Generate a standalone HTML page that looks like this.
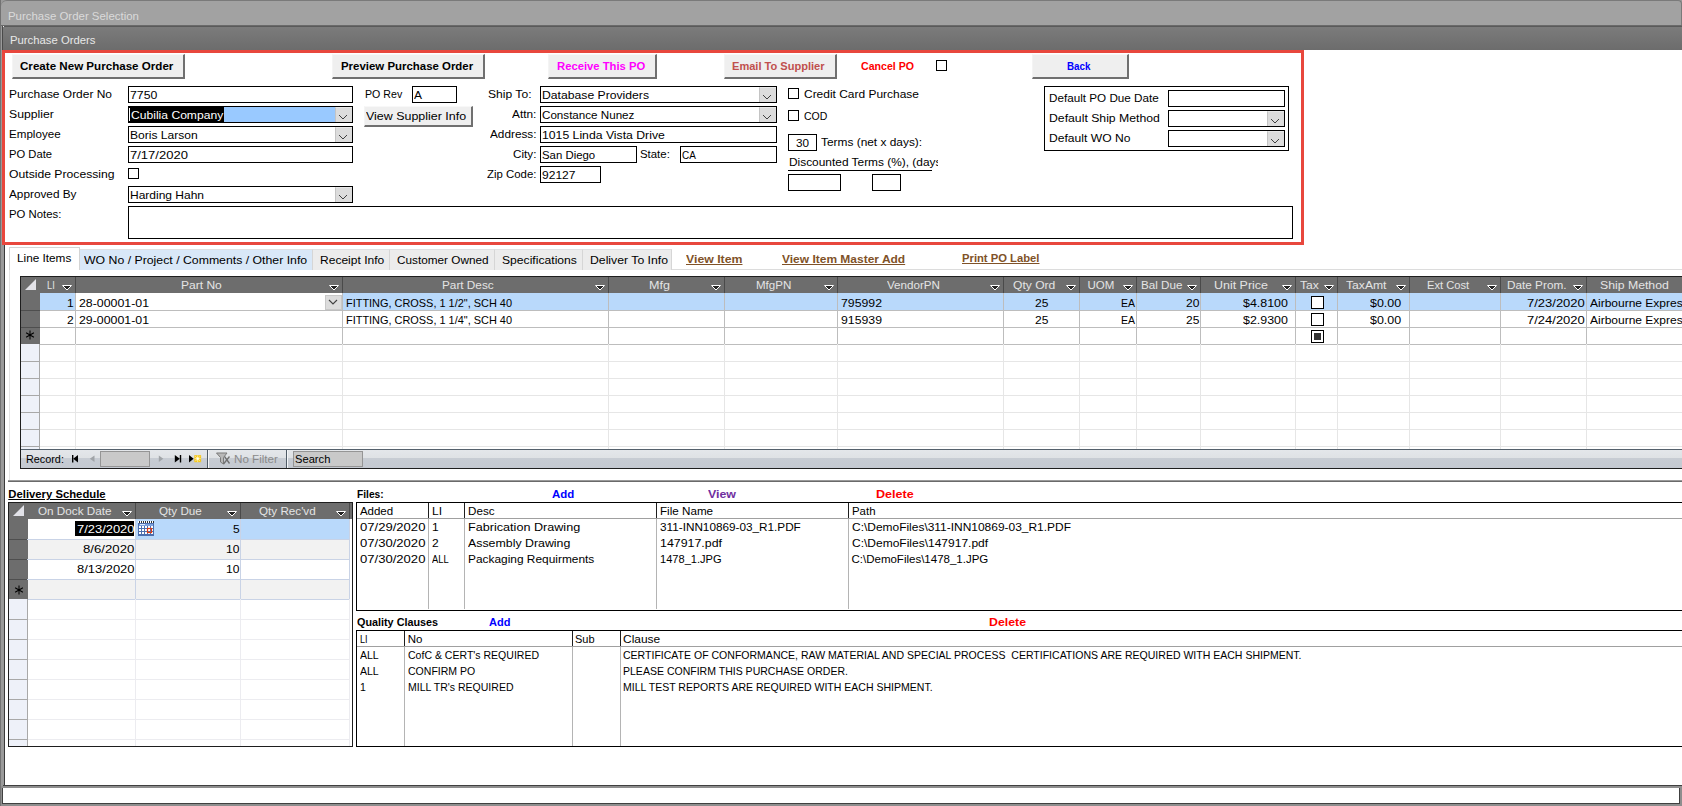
<!DOCTYPE html>
<html><head><meta charset="utf-8"><title>Purchase Order Selection</title><style>
html,body{margin:0;padding:0;}
body{width:1682px;height:806px;overflow:hidden;position:relative;font-family:"Liberation Sans",sans-serif;font-size:12px;color:#000;background:#fff;}
.a{position:absolute;}
.t{position:absolute;line-height:14px;white-space:nowrap;transform-origin:0 0;}
</style></head><body>
<div class="a" style="left:0px;top:0px;width:1682px;height:806px;background:#9a9a9a;"></div>
<div class="a" style="left:0px;top:0px;width:1px;height:806px;background:#727272;"></div>
<div class="a" style="left:1px;top:0px;width:1681px;height:25px;background:#a2a2a2;border-top-left-radius:6px;border-top-right-radius:4px;border-top:1px solid #7a7a7a;border-right:1px solid #7a7a7a;box-sizing:border-box;"></div>
<div class="a" style="left:1px;top:25px;width:1681px;height:1px;background:#6a6a6a;"></div>
<div class="t" style="left:7.80px;top:9px;font-size:11.4px;color:#dadada;transform:scaleX(1.0036);">Purchase Order Selection</div>
<div class="a" style="left:2px;top:26px;width:1680px;height:24px;background:linear-gradient(#7c7c7c,#6c6c6c);"></div>
<div class="a" style="left:2px;top:26px;width:1680px;height:1px;background:#5a5a5a;"></div>
<div class="a" style="left:2px;top:26px;width:1px;height:24px;background:#4a4a4a;"></div>
<div class="a" style="left:3px;top:26px;width:1px;height:1px;background:#f0f0f0;"></div>
<div class="t" style="left:9.70px;top:33px;font-size:11.4px;color:#e8e8e8;transform:scaleX(0.9934);">Purchase Orders</div>
<div class="a" style="left:5px;top:50px;width:1677px;height:735px;background:#fff;"></div>
<div class="a" style="left:4px;top:50px;width:1px;height:735px;background:#3a3a3a;"></div>
<div class="a" style="left:3px;top:785px;width:1679px;height:1px;background:#404040;"></div>
<div class="a" style="left:1px;top:786px;width:1681px;height:20px;background:#8e8e8e;"></div>
<div class="a" style="left:2px;top:788px;width:1676px;height:15px;background:#fff;border-left:1px solid #404040;border-right:1px solid #404040;border-bottom:1px solid #404040;"></div>
<div class="a" style="left:2px;top:50px;width:1296px;height:189px;border:3px solid #e8473d;background:#fff;"></div>
<div class="a" style="left:12px;top:54px;width:170px;height:22px;background:#efefef;border-top:1px solid #f8f8f8;border-left:1px solid #f4f4f4;border-right:2px solid #707070;border-bottom:2px solid #707070;"></div>
<div class="t" style="left:19.60px;top:59px;font-size:11.3px;font-weight:bold;color:#000;transform:scaleX(1.0262);">Create New Purchase Order</div>
<div class="a" style="left:332px;top:54px;width:150px;height:22px;background:#efefef;border-top:1px solid #f8f8f8;border-left:1px solid #f4f4f4;border-right:2px solid #707070;border-bottom:2px solid #707070;"></div>
<div class="t" style="left:340.80px;top:59px;font-size:11.3px;font-weight:bold;color:#000;transform:scaleX(1.0119);">Preview Purchase Order</div>
<div class="a" style="left:548px;top:54px;width:106px;height:22px;background:#efefef;border-top:1px solid #f8f8f8;border-left:1px solid #f4f4f4;border-right:2px solid #707070;border-bottom:2px solid #707070;"></div>
<div class="t" style="left:557.10px;top:59px;font-size:11.3px;font-weight:bold;color:#ff00ff;transform:scaleX(0.9971);">Receive This PO</div>
<div class="a" style="left:724px;top:54px;width:110px;height:22px;background:#efefef;border-top:1px solid #f8f8f8;border-left:1px solid #f4f4f4;border-right:2px solid #707070;border-bottom:2px solid #707070;"></div>
<div class="t" style="left:732.40px;top:59px;font-size:11.3px;font-weight:bold;color:#c0504d;transform:scaleX(0.9789);">Email To Supplier</div>
<div class="t" style="left:860.70px;top:59px;font-size:11.3px;font-weight:bold;color:#ff0000;transform:scaleX(0.9377);">Cancel PO</div>
<div class="a" style="left:936px;top:60px;width:9px;height:9px;border:1px solid #000;background:#fff;"></div>
<div class="a" style="left:1032px;top:54px;width:94px;height:22px;background:#efefef;border-top:1px solid #f8f8f8;border-left:1px solid #f4f4f4;border-right:2px solid #707070;border-bottom:2px solid #707070;"></div>
<div class="t" style="left:1067.00px;top:59px;font-size:11.3px;font-weight:bold;color:#0000ff;transform:scaleX(0.8662);">Back</div>
<div class="t" style="left:8.70px;top:87px;font-size:11.5px;transform:scaleX(1.0396);">Purchase Order No</div>
<div class="t" style="left:8.70px;top:107px;font-size:11.5px;transform:scaleX(1.0618);">Supplier</div>
<div class="t" style="left:8.70px;top:127px;font-size:11.5px;transform:scaleX(1.0090);">Employee</div>
<div class="t" style="left:8.70px;top:147px;font-size:11.5px;transform:scaleX(0.9750);">PO Date</div>
<div class="t" style="left:8.70px;top:167px;font-size:11.5px;transform:scaleX(1.0590);">Outside Processing</div>
<div class="t" style="left:8.70px;top:187px;font-size:11.5px;transform:scaleX(1.0251);">Approved By</div>
<div class="t" style="left:8.70px;top:207px;font-size:11.5px;transform:scaleX(0.9859);">PO Notes:</div>
<div class="a" style="left:128px;top:86px;width:223px;height:15px;border:1px solid #000;background:#fff;"></div>
<div class="t" style="left:129.90px;top:88px;font-size:11.5px;transform:scaleX(1.0671);">7750</div>
<div class="a" style="left:128px;top:106px;width:223px;height:15px;border:1px solid #000;background:#fff;"></div>
<div class="a" style="left:129px;top:107px;width:206px;height:15px;background:#99c9ff;"></div>
<div class="a" style="left:129px;top:107px;width:95px;height:15px;background:#000;"></div>
<div class="a" style="left:129px;top:108px;width:1px;height:13px;background:#fff;"></div>
<div class="t" style="left:130.60px;top:108px;font-size:11.5px;color:#fff;transform:scaleX(1.0529);">Cubilia Company</div>
<div class="a" style="left:335px;top:107px;width:16px;height:14px;background:#dcdcdc;border-left:1px solid #c4c4c4;border-top:1px solid #e8e8e8;"></div>
<svg class="a" style="left:338px;top:114px" width="10" height="6"><path d="M1 1 L5 5 L9 1" fill="none" stroke="#404040" stroke-width="1"/></svg>
<div class="a" style="left:128px;top:126px;width:223px;height:15px;border:1px solid #000;background:#fff;"></div>
<div class="t" style="left:129.90px;top:128px;font-size:11.5px;transform:scaleX(1.0502);">Boris Larson</div>
<div class="a" style="left:335px;top:127px;width:16px;height:14px;background:#dcdcdc;border-left:1px solid #c4c4c4;border-top:1px solid #e8e8e8;"></div>
<svg class="a" style="left:338px;top:134px" width="10" height="6"><path d="M1 1 L5 5 L9 1" fill="none" stroke="#404040" stroke-width="1"/></svg>
<div class="a" style="left:128px;top:146px;width:223px;height:15px;border:1px solid #000;background:#fff;"></div>
<div class="t" style="left:129.90px;top:148px;font-size:11.5px;transform:scaleX(1.1317);">7/17/2020</div>
<div class="a" style="left:128px;top:168px;width:9px;height:9px;border:1px solid #000;background:#fff;"></div>
<div class="a" style="left:128px;top:186px;width:223px;height:15px;border:1px solid #000;background:#fff;"></div>
<div class="t" style="left:129.90px;top:188px;font-size:11.5px;transform:scaleX(1.0435);">Harding Hahn</div>
<div class="a" style="left:335px;top:187px;width:16px;height:14px;background:#dcdcdc;border-left:1px solid #c4c4c4;border-top:1px solid #e8e8e8;"></div>
<svg class="a" style="left:338px;top:194px" width="10" height="6"><path d="M1 1 L5 5 L9 1" fill="none" stroke="#404040" stroke-width="1"/></svg>
<div class="a" style="left:128px;top:206px;width:1163px;height:31px;border:1px solid #000;background:#fff;"></div>
<div class="t" style="left:364.90px;top:87px;font-size:11.5px;transform:scaleX(0.9240);">PO Rev</div>
<div class="a" style="left:412px;top:86px;width:43px;height:15px;border:1px solid #000;background:#fff;"></div>
<div class="t" style="left:413.70px;top:88px;font-size:11.5px;transform:scaleX(1.0435);">A</div>
<div class="a" style="left:364px;top:106px;width:106px;height:18px;background:#efefef;border-top:1px solid #f8f8f8;border-left:1px solid #f4f4f4;border-right:2px solid #707070;border-bottom:2px solid #707070;"></div>
<div class="t" style="left:366.40px;top:109px;font-size:11.5px;transform:scaleX(1.0823);">View Supplier Info</div>
<div class="t" style="left:488.10px;top:87px;font-size:11.5px;transform:scaleX(1.0521);">Ship To:</div>
<div class="t" style="left:511.90px;top:107px;font-size:11.5px;transform:scaleX(1.0274);">Attn:</div>
<div class="t" style="left:489.70px;top:127px;font-size:11.5px;transform:scaleX(1.0246);">Address:</div>
<div class="t" style="left:512.70px;top:147px;font-size:11.5px;transform:scaleX(1.0174);">City:</div>
<div class="t" style="left:640.30px;top:147px;font-size:11.5px;transform:scaleX(0.9917);">State:</div>
<div class="t" style="left:486.70px;top:167px;font-size:11.5px;transform:scaleX(0.9908);">Zip Code:</div>
<div class="a" style="left:540px;top:86px;width:235px;height:15px;border:1px solid #000;background:#fff;"></div>
<div class="t" style="left:542.00px;top:88px;font-size:11.5px;transform:scaleX(1.0594);">Database Providers</div>
<div class="a" style="left:759px;top:87px;width:16px;height:14px;background:#dcdcdc;border-left:1px solid #c4c4c4;border-top:1px solid #e8e8e8;"></div>
<svg class="a" style="left:762px;top:94px" width="10" height="6"><path d="M1 1 L5 5 L9 1" fill="none" stroke="#404040" stroke-width="1"/></svg>
<div class="a" style="left:540px;top:106px;width:235px;height:15px;border:1px solid #000;background:#fff;"></div>
<div class="t" style="left:542.00px;top:108px;font-size:11.5px;transform:scaleX(1.0107);">Constance Nunez</div>
<div class="a" style="left:759px;top:107px;width:16px;height:14px;background:#dcdcdc;border-left:1px solid #c4c4c4;border-top:1px solid #e8e8e8;"></div>
<svg class="a" style="left:762px;top:114px" width="10" height="6"><path d="M1 1 L5 5 L9 1" fill="none" stroke="#404040" stroke-width="1"/></svg>
<div class="a" style="left:540px;top:126px;width:235px;height:15px;border:1px solid #000;background:#fff;"></div>
<div class="t" style="left:542.00px;top:128px;font-size:11.5px;transform:scaleX(1.0632);">1015 Linda Vista Drive</div>
<div class="a" style="left:540px;top:146px;width:95px;height:15px;border:1px solid #000;background:#fff;"></div>
<div class="t" style="left:542.00px;top:148px;font-size:11.5px;transform:scaleX(0.9906);">San Diego</div>
<div class="a" style="left:680px;top:146px;width:95px;height:15px;border:1px solid #000;background:#fff;"></div>
<div class="t" style="left:681.60px;top:148px;font-size:11.5px;transform:scaleX(0.8638);">CA</div>
<div class="a" style="left:540px;top:166px;width:59px;height:15px;border:1px solid #000;background:#fff;"></div>
<div class="t" style="left:542.00px;top:168px;font-size:11.5px;transform:scaleX(1.0475);">92127</div>
<div class="a" style="left:788px;top:88px;width:9px;height:9px;border:1px solid #000;background:#fff;"></div>
<div class="t" style="left:804.00px;top:87px;font-size:11.5px;transform:scaleX(1.0400);">Credit Card Purchase</div>
<div class="a" style="left:788px;top:110px;width:9px;height:9px;border:1px solid #000;background:#fff;"></div>
<div class="t" style="left:804.00px;top:109px;font-size:11.5px;transform:scaleX(0.9118);">COD</div>
<div class="a" style="left:788px;top:134px;width:27px;height:15px;border:1px solid #000;background:#fff;"></div>
<div class="t" style="left:795.50px;top:136px;font-size:11.5px;transform:scaleX(1.0162);">30</div>
<div class="t" style="left:820.90px;top:135px;font-size:11.5px;transform:scaleX(1.0340);">Terms (net x days):</div>
<div class="a" style="left:789px;top:155px;width:149px;height:14px;overflow:hidden">
<div class="t" style="left:0.10px;top:0px;font-size:11.5px;transform:scaleX(1.0340);">Discounted Terms (%), (days):</div>
</div>
<div class="a" style="left:788px;top:170px;width:144px;height:1px;background:#000;"></div>
<div class="a" style="left:788px;top:174px;width:51px;height:15px;border:1px solid #000;background:#fff;"></div>
<div class="a" style="left:872px;top:174px;width:27px;height:15px;border:1px solid #000;background:#fff;"></div>
<div class="a" style="left:1044px;top:86px;width:243px;height:63px;border:1px solid #000;"></div>
<div class="t" style="left:1048.80px;top:91px;font-size:11.5px;transform:scaleX(1.0164);">Default PO Due Date</div>
<div class="t" style="left:1048.80px;top:111px;font-size:11.5px;transform:scaleX(1.0642);">Default Ship Method</div>
<div class="t" style="left:1048.80px;top:131px;font-size:11.5px;transform:scaleX(1.0526);">Default WO No</div>
<div class="a" style="left:1168px;top:90px;width:115px;height:15px;border:1px solid #000;background:#fff;"></div>
<div class="a" style="left:1168px;top:110px;width:115px;height:15px;border:1px solid #000;background:#fff;"></div>
<div class="a" style="left:1267px;top:111px;width:16px;height:14px;background:#dcdcdc;border-left:1px solid #c4c4c4;border-top:1px solid #e8e8e8;"></div>
<svg class="a" style="left:1270px;top:118px" width="10" height="6"><path d="M1 1 L5 5 L9 1" fill="none" stroke="#404040" stroke-width="1"/></svg>
<div class="a" style="left:1168px;top:130px;width:115px;height:15px;border:1px solid #000;background:#fff;"></div>
<div class="a" style="left:1267px;top:131px;width:16px;height:14px;background:#dcdcdc;border-left:1px solid #c4c4c4;border-top:1px solid #e8e8e8;"></div>
<svg class="a" style="left:1270px;top:138px" width="10" height="6"><path d="M1 1 L5 5 L9 1" fill="none" stroke="#404040" stroke-width="1"/></svg>
<div class="a" style="left:9px;top:269px;width:1673px;height:212px;border-left:1px solid #e4e4e4;border-top:1px solid #dcdcdc;"></div>
<div class="a" style="left:8px;top:480px;width:1674px;height:1px;background:#9a9a9a;"></div>
<div class="a" style="left:8px;top:481px;width:1674px;height:1px;background:#6a6a6a;"></div>
<div class="a" style="left:80px;top:249px;width:232px;height:20px;background:#d9e8f8;border-right:1px solid #d6d6d6;border-top:1px solid #e0e0e0;"></div>
<div class="t" style="left:83.80px;top:253px;font-size:11.5px;transform:scaleX(1.0680);">WO No / Project / Comments / Other Info</div>
<div class="a" style="left:313px;top:249px;width:76px;height:20px;background:#ececec;border-right:1px solid #d6d6d6;border-top:1px solid #e0e0e0;"></div>
<div class="t" style="left:319.60px;top:253px;font-size:11.5px;transform:scaleX(1.0461);">Receipt Info</div>
<div class="a" style="left:390px;top:249px;width:104px;height:20px;background:#ececec;border-right:1px solid #d6d6d6;border-top:1px solid #e0e0e0;"></div>
<div class="t" style="left:396.90px;top:253px;font-size:11.5px;transform:scaleX(1.0226);">Customer Owned</div>
<div class="a" style="left:495px;top:249px;width:87px;height:20px;background:#ececec;border-right:1px solid #d6d6d6;border-top:1px solid #e0e0e0;"></div>
<div class="t" style="left:501.50px;top:253px;font-size:11.5px;transform:scaleX(1.0556);">Specifications</div>
<div class="a" style="left:583px;top:249px;width:88px;height:20px;background:#ececec;border-right:1px solid #d6d6d6;border-top:1px solid #e0e0e0;"></div>
<div class="t" style="left:590.00px;top:253px;font-size:11.5px;transform:scaleX(1.0642);">Deliver To Info</div>
<div class="a" style="left:9px;top:247px;width:69px;height:22px;background:#fff;border:1px solid #d4d4d4;border-bottom:none;"></div>
<div class="t" style="left:16.70px;top:251px;font-size:11.5px;transform:scaleX(1.0235);">Line Items</div>
<div class="t" style="left:685.60px;top:252px;font-size:11.3px;font-weight:bold;color:#7f5228;transform:scaleX(1.0882);text-decoration:underline;">View Item</div>
<div class="t" style="left:781.70px;top:252px;font-size:11.3px;font-weight:bold;color:#7f5228;transform:scaleX(1.0605);text-decoration:underline;">View Item Master Add</div>
<div class="t" style="left:961.60px;top:251px;font-size:11.3px;font-weight:bold;color:#7f5228;transform:scaleX(0.9954);text-decoration:underline;">Print PO Label</div>
<div class="a" style="left:20px;top:276px;width:1662px;height:193px;background:#fff;"></div>
<div class="a" style="left:20px;top:276px;width:1662px;height:1px;background:#1e1e1e;"></div>
<div class="a" style="left:20px;top:276px;width:1px;height:193px;background:#1e1e1e;"></div>
<div class="a" style="left:20px;top:468px;width:1662px;height:1px;background:#1e1e1e;"></div>
<div class="a" style="left:21px;top:277px;width:1661px;height:16px;background:#6d6d6d;"></div>
<svg class="a" style="left:25px;top:279px" width="12" height="12"><path d="M11 0 L11 11 L0 11 Z" fill="#e2e2e8"/></svg>
<div class="a" style="left:21px;top:293px;width:19px;height:51px;background:#6d6d6d;"></div>
<div class="a" style="left:21px;top:310px;width:19px;height:1px;background:#4e4e4e;"></div>
<div class="a" style="left:21px;top:327px;width:19px;height:1px;background:#4e4e4e;"></div>
<div class="a" style="left:21px;top:344px;width:18px;height:105px;background:#eef1f9;"></div>
<div class="a" style="left:21px;top:361px;width:18px;height:1px;background:#a8a8a8;"></div>
<div class="a" style="left:21px;top:378px;width:18px;height:1px;background:#a8a8a8;"></div>
<div class="a" style="left:21px;top:395px;width:18px;height:1px;background:#a8a8a8;"></div>
<div class="a" style="left:21px;top:412px;width:18px;height:1px;background:#a8a8a8;"></div>
<div class="a" style="left:21px;top:429px;width:18px;height:1px;background:#a8a8a8;"></div>
<div class="a" style="left:21px;top:446px;width:18px;height:1px;background:#a8a8a8;"></div>
<div class="a" style="left:39px;top:344px;width:1px;height:105px;background:#a8a8a8;"></div>
<div class="a" style="left:40px;top:293px;width:1642px;height:17px;background:#b9d9fb;"></div>
<div class="a" style="left:76px;top:293px;width:266px;height:17px;background:#fff;"></div>
<div class="a" style="left:40px;top:310px;width:1642px;height:1px;background:#bdbdbd;"></div>
<div class="a" style="left:40px;top:327px;width:1642px;height:1px;background:#bdbdbd;"></div>
<div class="a" style="left:40px;top:344px;width:1642px;height:1px;background:#bdbdbd;"></div>
<div class="a" style="left:40px;top:361px;width:1642px;height:1px;background:#e6e6e6;"></div>
<div class="a" style="left:40px;top:378px;width:1642px;height:1px;background:#e6e6e6;"></div>
<div class="a" style="left:40px;top:395px;width:1642px;height:1px;background:#e6e6e6;"></div>
<div class="a" style="left:40px;top:412px;width:1642px;height:1px;background:#e6e6e6;"></div>
<div class="a" style="left:40px;top:429px;width:1642px;height:1px;background:#e6e6e6;"></div>
<div class="a" style="left:40px;top:446px;width:1642px;height:1px;background:#e6e6e6;"></div>
<div class="a" style="left:75px;top:277px;width:1px;height:16px;background:#4a4a4a;"></div>
<div class="a" style="left:75px;top:293px;width:1px;height:51px;background:#bdbdbd;"></div>
<div class="a" style="left:75px;top:344px;width:1px;height:105px;background:#e6e6e6;"></div>
<div class="a" style="left:342px;top:277px;width:1px;height:16px;background:#4a4a4a;"></div>
<div class="a" style="left:342px;top:293px;width:1px;height:51px;background:#bdbdbd;"></div>
<div class="a" style="left:342px;top:344px;width:1px;height:105px;background:#e6e6e6;"></div>
<div class="a" style="left:608px;top:277px;width:1px;height:16px;background:#4a4a4a;"></div>
<div class="a" style="left:608px;top:293px;width:1px;height:51px;background:#bdbdbd;"></div>
<div class="a" style="left:608px;top:344px;width:1px;height:105px;background:#e6e6e6;"></div>
<div class="a" style="left:724px;top:277px;width:1px;height:16px;background:#4a4a4a;"></div>
<div class="a" style="left:724px;top:293px;width:1px;height:51px;background:#bdbdbd;"></div>
<div class="a" style="left:724px;top:344px;width:1px;height:105px;background:#e6e6e6;"></div>
<div class="a" style="left:837px;top:277px;width:1px;height:16px;background:#4a4a4a;"></div>
<div class="a" style="left:837px;top:293px;width:1px;height:51px;background:#bdbdbd;"></div>
<div class="a" style="left:837px;top:344px;width:1px;height:105px;background:#e6e6e6;"></div>
<div class="a" style="left:1003px;top:277px;width:1px;height:16px;background:#4a4a4a;"></div>
<div class="a" style="left:1003px;top:293px;width:1px;height:51px;background:#bdbdbd;"></div>
<div class="a" style="left:1003px;top:344px;width:1px;height:105px;background:#e6e6e6;"></div>
<div class="a" style="left:1079px;top:277px;width:1px;height:16px;background:#4a4a4a;"></div>
<div class="a" style="left:1079px;top:293px;width:1px;height:51px;background:#bdbdbd;"></div>
<div class="a" style="left:1079px;top:344px;width:1px;height:105px;background:#e6e6e6;"></div>
<div class="a" style="left:1136px;top:277px;width:1px;height:16px;background:#4a4a4a;"></div>
<div class="a" style="left:1136px;top:293px;width:1px;height:51px;background:#bdbdbd;"></div>
<div class="a" style="left:1136px;top:344px;width:1px;height:105px;background:#e6e6e6;"></div>
<div class="a" style="left:1200px;top:277px;width:1px;height:16px;background:#4a4a4a;"></div>
<div class="a" style="left:1200px;top:293px;width:1px;height:51px;background:#bdbdbd;"></div>
<div class="a" style="left:1200px;top:344px;width:1px;height:105px;background:#e6e6e6;"></div>
<div class="a" style="left:1295px;top:277px;width:1px;height:16px;background:#4a4a4a;"></div>
<div class="a" style="left:1295px;top:293px;width:1px;height:51px;background:#bdbdbd;"></div>
<div class="a" style="left:1295px;top:344px;width:1px;height:105px;background:#e6e6e6;"></div>
<div class="a" style="left:1337px;top:277px;width:1px;height:16px;background:#4a4a4a;"></div>
<div class="a" style="left:1337px;top:293px;width:1px;height:51px;background:#bdbdbd;"></div>
<div class="a" style="left:1337px;top:344px;width:1px;height:105px;background:#e6e6e6;"></div>
<div class="a" style="left:1409px;top:277px;width:1px;height:16px;background:#4a4a4a;"></div>
<div class="a" style="left:1409px;top:293px;width:1px;height:51px;background:#bdbdbd;"></div>
<div class="a" style="left:1409px;top:344px;width:1px;height:105px;background:#e6e6e6;"></div>
<div class="a" style="left:1500px;top:277px;width:1px;height:16px;background:#4a4a4a;"></div>
<div class="a" style="left:1500px;top:293px;width:1px;height:51px;background:#bdbdbd;"></div>
<div class="a" style="left:1500px;top:344px;width:1px;height:105px;background:#e6e6e6;"></div>
<div class="a" style="left:1586px;top:277px;width:1px;height:16px;background:#4a4a4a;"></div>
<div class="a" style="left:1586px;top:293px;width:1px;height:51px;background:#bdbdbd;"></div>
<div class="a" style="left:1586px;top:344px;width:1px;height:105px;background:#e6e6e6;"></div>
<div class="a" style="left:1697px;top:277px;width:1px;height:16px;background:#4a4a4a;"></div>
<div class="a" style="left:1697px;top:293px;width:1px;height:51px;background:#bdbdbd;"></div>
<div class="a" style="left:1697px;top:344px;width:1px;height:105px;background:#e6e6e6;"></div>
<div class="t" style="left:46.95px;top:278px;font-size:11.5px;color:#e4e4e4;transform:scaleX(0.8028);">LI</div>
<svg class="a" style="left:62px;top:285px" width="10" height="6"><path d="M0.5 0.5 H9.5 L5 5 Z" fill="#222" stroke="#fff" stroke-width="1" stroke-linejoin="bevel"/></svg>
<div class="t" style="left:181.40px;top:278px;font-size:11.5px;color:#e4e4e4;transform:scaleX(1.0465);">Part No</div>
<svg class="a" style="left:329px;top:285px" width="10" height="6"><path d="M0.5 0.5 H9.5 L5 5 Z" fill="#222" stroke="#fff" stroke-width="1" stroke-linejoin="bevel"/></svg>
<div class="t" style="left:442.45px;top:278px;font-size:11.5px;color:#e4e4e4;transform:scaleX(1.0240);">Part Desc</div>
<svg class="a" style="left:595px;top:285px" width="10" height="6"><path d="M0.5 0.5 H9.5 L5 5 Z" fill="#222" stroke="#fff" stroke-width="1" stroke-linejoin="bevel"/></svg>
<div class="t" style="left:648.85px;top:278px;font-size:11.5px;color:#e4e4e4;transform:scaleX(1.0902);">Mfg</div>
<svg class="a" style="left:711px;top:285px" width="10" height="6"><path d="M0.5 0.5 H9.5 L5 5 Z" fill="#222" stroke="#fff" stroke-width="1" stroke-linejoin="bevel"/></svg>
<div class="t" style="left:756.15px;top:278px;font-size:11.5px;color:#e4e4e4;transform:scaleX(1.0044);">MfgPN</div>
<svg class="a" style="left:824px;top:285px" width="10" height="6"><path d="M0.5 0.5 H9.5 L5 5 Z" fill="#222" stroke="#fff" stroke-width="1" stroke-linejoin="bevel"/></svg>
<div class="t" style="left:886.80px;top:278px;font-size:11.5px;color:#e4e4e4;transform:scaleX(1.0110);">VendorPN</div>
<svg class="a" style="left:990px;top:285px" width="10" height="6"><path d="M0.5 0.5 H9.5 L5 5 Z" fill="#222" stroke="#fff" stroke-width="1" stroke-linejoin="bevel"/></svg>
<div class="t" style="left:1013.15px;top:278px;font-size:11.5px;color:#e4e4e4;transform:scaleX(1.0507);">Qty Ord</div>
<svg class="a" style="left:1066px;top:285px" width="10" height="6"><path d="M0.5 0.5 H9.5 L5 5 Z" fill="#222" stroke="#fff" stroke-width="1" stroke-linejoin="bevel"/></svg>
<div class="t" style="left:1087.40px;top:278px;font-size:11.5px;color:#e4e4e4;">UOM</div>
<svg class="a" style="left:1123px;top:285px" width="10" height="6"><path d="M0.5 0.5 H9.5 L5 5 Z" fill="#222" stroke="#fff" stroke-width="1" stroke-linejoin="bevel"/></svg>
<div class="t" style="left:1140.60px;top:278px;font-size:11.5px;color:#e4e4e4;transform:scaleX(1.0119);">Bal Due</div>
<svg class="a" style="left:1187px;top:285px" width="10" height="6"><path d="M0.5 0.5 H9.5 L5 5 Z" fill="#222" stroke="#fff" stroke-width="1" stroke-linejoin="bevel"/></svg>
<div class="t" style="left:1213.80px;top:278px;font-size:11.5px;color:#e4e4e4;transform:scaleX(1.0833);">Unit Price</div>
<svg class="a" style="left:1282px;top:285px" width="10" height="6"><path d="M0.5 0.5 H9.5 L5 5 Z" fill="#222" stroke="#fff" stroke-width="1" stroke-linejoin="bevel"/></svg>
<div class="t" style="left:1299.85px;top:278px;font-size:11.5px;color:#e4e4e4;transform:scaleX(1.0561);">Tax</div>
<svg class="a" style="left:1324px;top:285px" width="10" height="6"><path d="M0.5 0.5 H9.5 L5 5 Z" fill="#222" stroke="#fff" stroke-width="1" stroke-linejoin="bevel"/></svg>
<div class="t" style="left:1346.05px;top:278px;font-size:11.5px;color:#e4e4e4;transform:scaleX(1.0563);">TaxAmt</div>
<svg class="a" style="left:1396px;top:285px" width="10" height="6"><path d="M0.5 0.5 H9.5 L5 5 Z" fill="#222" stroke="#fff" stroke-width="1" stroke-linejoin="bevel"/></svg>
<div class="t" style="left:1426.70px;top:278px;font-size:11.5px;color:#e4e4e4;transform:scaleX(0.9711);">Ext Cost</div>
<svg class="a" style="left:1487px;top:285px" width="10" height="6"><path d="M0.5 0.5 H9.5 L5 5 Z" fill="#222" stroke="#fff" stroke-width="1" stroke-linejoin="bevel"/></svg>
<div class="t" style="left:1506.55px;top:278px;font-size:11.5px;color:#e4e4e4;transform:scaleX(1.0231);">Date Prom.</div>
<svg class="a" style="left:1573px;top:285px" width="10" height="6"><path d="M0.5 0.5 H9.5 L5 5 Z" fill="#222" stroke="#fff" stroke-width="1" stroke-linejoin="bevel"/></svg>
<div class="t" style="left:1600.40px;top:278px;font-size:11.5px;color:#e4e4e4;transform:scaleX(1.0655);">Ship Method</div>
<div class="a" style="left:325px;top:295px;width:15px;height:13px;background:#dcdcdc;border:1px solid #c8c8c8;"></div>
<svg class="a" style="left:328px;top:299px" width="10" height="6"><path d="M1 1 L5 5 L9 1" fill="none" stroke="#404040" stroke-width="1.1"/></svg>
<div class="t" style="left:67.13px;top:296px;font-size:11.5px;transform:scaleX(1.0435);">1</div>
<div class="t" style="left:78.60px;top:296px;font-size:11.5px;transform:scaleX(1.0732);">28-00001-01</div>
<div class="t" style="left:345.90px;top:296px;font-size:11.5px;transform:scaleX(0.9501);">FITTING, CROSS, 1 1/2&quot;, SCH 40</div>
<div class="t" style="left:840.50px;top:296px;font-size:11.5px;transform:scaleX(1.0684);">795992</div>
<div class="t" style="left:1035.10px;top:296px;font-size:11.5px;transform:scaleX(1.0475);">25</div>
<div class="t" style="left:1121.00px;top:296px;font-size:11.5px;transform:scaleX(0.9126);">EA</div>
<div class="t" style="left:1185.80px;top:296px;font-size:11.5px;transform:scaleX(1.0475);">20</div>
<div class="t" style="left:1242.50px;top:296px;font-size:11.5px;transform:scaleX(1.0801);">$4.8100</div>
<div class="t" style="left:1370.40px;top:296px;font-size:11.5px;transform:scaleX(1.0806);">$0.00</div>
<div class="t" style="left:1527.10px;top:296px;font-size:11.5px;transform:scaleX(1.1297);">7/23/2020</div>
<div class="t" style="left:1589.70px;top:296px;font-size:11.5px;transform:scaleX(1.0435);">Airbourne Express</div>
<div class="t" style="left:67.13px;top:313px;font-size:11.5px;transform:scaleX(1.0435);">2</div>
<div class="t" style="left:78.60px;top:313px;font-size:11.5px;transform:scaleX(1.0732);">29-00001-01</div>
<div class="t" style="left:345.90px;top:313px;font-size:11.5px;transform:scaleX(0.9501);">FITTING, CROSS, 1 1/4&quot;, SCH 40</div>
<div class="t" style="left:840.50px;top:313px;font-size:11.5px;transform:scaleX(1.0684);">915939</div>
<div class="t" style="left:1035.10px;top:313px;font-size:11.5px;transform:scaleX(1.0475);">25</div>
<div class="t" style="left:1121.00px;top:313px;font-size:11.5px;transform:scaleX(0.9126);">EA</div>
<div class="t" style="left:1185.80px;top:313px;font-size:11.5px;transform:scaleX(1.0475);">25</div>
<div class="t" style="left:1242.50px;top:313px;font-size:11.5px;transform:scaleX(1.0801);">$2.9300</div>
<div class="t" style="left:1370.40px;top:313px;font-size:11.5px;transform:scaleX(1.0806);">$0.00</div>
<div class="t" style="left:1527.10px;top:313px;font-size:11.5px;transform:scaleX(1.1297);">7/24/2020</div>
<div class="t" style="left:1589.70px;top:313px;font-size:11.5px;transform:scaleX(1.0435);">Airbourne Express</div>
<div class="a" style="left:1311px;top:296px;width:11px;height:11px;border:1px solid #000;background:#fff;"></div>
<div class="a" style="left:1311px;top:313px;width:11px;height:11px;border:1px solid #000;background:#fff;"></div>
<div class="a" style="left:1311px;top:330px;width:11px;height:11px;border:1px solid #000;background:#fff;"></div>
<div class="a" style="left:1314px;top:333px;width:7px;height:7px;background:#333;"></div>
<svg class="a" style="left:24px;top:329px" width="12" height="12"><path d="M6 1.5 V10.5 M2.1 3.75 L9.9 8.25 M2.1 8.25 L9.9 3.75" stroke="#000" stroke-width="1.05"/></svg>
<div class="a" style="left:21px;top:449px;width:1661px;height:19px;background:linear-gradient(#e4e7eb 0%,#dfe2e5 45%,#c7ccd3 50%,#c4c9d1 100%);"></div>
<div class="a" style="left:21px;top:449px;width:1661px;height:1px;background:#54606c;"></div>
<div class="t" style="left:25.50px;top:452px;font-size:11.5px;color:#000;transform:scaleX(0.9412);">Record:</div>
<svg class="a" style="left:60px;top:448px" width="180" height="21"><rect x="12" y="7" width="1.4" height="7.5" fill="#000"/><path d="M18 7 L13.2 10.75 L18 14.5 Z" fill="#000"/><path d="M34.5 7.5 L29.8 10.75 L34.5 14 Z" fill="#a0a4a8"/><path d="M98.8 7.5 L103.3 10.75 L98.8 14 Z" fill="#a0a4a8"/><path d="M114.8 7 L119.8 10.75 L114.8 14.5 Z" fill="#000"/><rect x="119.8" y="7" width="1.4" height="7.5" fill="#000"/><path d="M129 7 L133.6 10.75 L129 14.5 Z" fill="#000"/><rect x="134.3" y="7.2" width="6.8" height="7" fill="#f5c518"/><path d="M137.7 7.5 V14 M134.6 10.7 H140.8 M135.3 8.3 L140 13.2 M140 8.3 L135.3 13.2" stroke="#fff2a0" stroke-width="0.9"/><circle cx="137.7" cy="10.7" r="1.1" fill="#fff"/><path d="M156.5 5 L167 5 L163.5 9.5 L163.5 16 L160.5 14 L160.5 9.5 Z" fill="#b8b8b8" stroke="#7a7a7a" stroke-width="1"/><path d="M164.5 8.5 L169.5 15.5 M169.5 8.5 L163.5 16" stroke="#707070" stroke-width="1.3"/></svg>
<div class="a" style="left:100px;top:451px;width:48px;height:14px;background:#c9c9c9;border:1px solid #959595;"></div>
<div class="a" style="left:207px;top:450px;width:1px;height:18px;background:#4f5b66;"></div>
<div class="a" style="left:208px;top:450px;width:1px;height:18px;background:#f4f6f8;"></div>
<div class="a" style="left:286px;top:450px;width:1px;height:18px;background:#4f5b66;"></div>
<div class="a" style="left:287px;top:450px;width:1px;height:18px;background:#f4f6f8;"></div>
<div class="t" style="left:233.60px;top:452px;font-size:11.5px;color:#8a8a8a;transform:scaleX(1.0103);">No Filter</div>
<div class="a" style="left:293px;top:451px;width:68px;height:14px;background:#c9c9c9;border:1px solid #959595;"></div>
<div class="t" style="left:294.60px;top:452px;font-size:11.5px;color:#000;transform:scaleX(0.9704);">Search</div>
<div class="t" style="left:8.30px;top:487px;font-size:11.3px;font-weight:bold;text-decoration:underline;">Delivery Schedule</div>
<div class="a" style="left:8px;top:502px;width:345px;height:245px;background:#fff;"></div>
<div class="a" style="left:8px;top:502px;width:345px;height:1px;background:#1e1e1e;"></div>
<div class="a" style="left:8px;top:746px;width:345px;height:1px;background:#1e1e1e;"></div>
<div class="a" style="left:8px;top:502px;width:1px;height:245px;background:#1e1e1e;"></div>
<div class="a" style="left:352px;top:502px;width:1px;height:245px;background:#1e1e1e;"></div>
<div class="a" style="left:9px;top:503px;width:343px;height:16px;background:#6d6d6d;"></div>
<svg class="a" style="left:13px;top:505px" width="12" height="12"><path d="M11 0 L11 11 L0 11 Z" fill="#e2e2e8"/></svg>
<div class="a" style="left:27px;top:519px;width:325px;height:20px;background:#fff;"></div>
<div class="a" style="left:136px;top:519px;width:213px;height:20px;background:#b9d9fb;"></div>
<div class="a" style="left:27px;top:540px;width:323px;height:19px;background:#f2f2f2;"></div>
<div class="a" style="left:27px;top:580px;width:323px;height:19px;background:#f2f2f2;"></div>
<div class="a" style="left:9px;top:519px;width:19px;height:80px;background:#6d6d6d;"></div>
<div class="a" style="left:9px;top:539px;width:18px;height:1px;background:#4e4e4e;"></div>
<div class="a" style="left:9px;top:559px;width:18px;height:1px;background:#4e4e4e;"></div>
<div class="a" style="left:9px;top:579px;width:18px;height:1px;background:#4e4e4e;"></div>
<div class="a" style="left:9px;top:599px;width:18px;height:147px;background:#eef1f9;"></div>
<div class="a" style="left:9px;top:619px;width:18px;height:1px;background:#a8a8a8;"></div>
<div class="a" style="left:9px;top:639px;width:18px;height:1px;background:#a8a8a8;"></div>
<div class="a" style="left:9px;top:659px;width:18px;height:1px;background:#a8a8a8;"></div>
<div class="a" style="left:9px;top:679px;width:18px;height:1px;background:#a8a8a8;"></div>
<div class="a" style="left:9px;top:699px;width:18px;height:1px;background:#a8a8a8;"></div>
<div class="a" style="left:9px;top:719px;width:18px;height:1px;background:#a8a8a8;"></div>
<div class="a" style="left:9px;top:739px;width:18px;height:1px;background:#a8a8a8;"></div>
<div class="a" style="left:27px;top:539px;width:323px;height:1px;background:#c9d3e6;"></div>
<div class="a" style="left:27px;top:559px;width:323px;height:1px;background:#c9d3e6;"></div>
<div class="a" style="left:27px;top:579px;width:323px;height:1px;background:#c9d3e6;"></div>
<div class="a" style="left:27px;top:599px;width:323px;height:1px;background:#c9d3e6;"></div>
<div class="a" style="left:27px;top:619px;width:323px;height:1px;background:#ececf0;"></div>
<div class="a" style="left:27px;top:639px;width:323px;height:1px;background:#ececf0;"></div>
<div class="a" style="left:27px;top:659px;width:323px;height:1px;background:#ececf0;"></div>
<div class="a" style="left:27px;top:679px;width:323px;height:1px;background:#ececf0;"></div>
<div class="a" style="left:27px;top:699px;width:323px;height:1px;background:#ececf0;"></div>
<div class="a" style="left:27px;top:719px;width:323px;height:1px;background:#ececf0;"></div>
<div class="a" style="left:27px;top:739px;width:323px;height:1px;background:#ececf0;"></div>
<div class="a" style="left:27px;top:599px;width:1px;height:147px;background:#a8a8a8;"></div>
<div class="a" style="left:135px;top:503px;width:1px;height:16px;background:#4a4a4a;"></div>
<div class="a" style="left:135px;top:519px;width:1px;height:80px;background:#c9d3e6;"></div>
<div class="a" style="left:135px;top:599px;width:1px;height:147px;background:#ececf0;"></div>
<div class="a" style="left:240px;top:503px;width:1px;height:16px;background:#4a4a4a;"></div>
<div class="a" style="left:240px;top:519px;width:1px;height:80px;background:#c9d3e6;"></div>
<div class="a" style="left:240px;top:599px;width:1px;height:147px;background:#ececf0;"></div>
<div class="a" style="left:349px;top:503px;width:1px;height:16px;background:#4a4a4a;"></div>
<div class="a" style="left:349px;top:519px;width:1px;height:80px;background:#c9d3e6;"></div>
<div class="a" style="left:349px;top:599px;width:1px;height:147px;background:#ececf0;"></div>
<div class="t" style="left:37.55px;top:504px;font-size:11.5px;color:#e4e4e4;transform:scaleX(1.0177);">On Dock Date</div>
<svg class="a" style="left:122px;top:511px" width="10" height="6"><path d="M0.5 0.5 H9.5 L5 5 Z" fill="#222" stroke="#fff" stroke-width="1" stroke-linejoin="bevel"/></svg>
<div class="t" style="left:159.40px;top:504px;font-size:11.5px;color:#e4e4e4;transform:scaleX(1.0146);">Qty Due</div>
<svg class="a" style="left:227px;top:511px" width="10" height="6"><path d="M0.5 0.5 H9.5 L5 5 Z" fill="#222" stroke="#fff" stroke-width="1" stroke-linejoin="bevel"/></svg>
<div class="t" style="left:259.45px;top:504px;font-size:11.5px;color:#e4e4e4;transform:scaleX(1.0147);">Qty Rec&#x27;vd</div>
<svg class="a" style="left:336px;top:511px" width="10" height="6"><path d="M0.5 0.5 H9.5 L5 5 Z" fill="#222" stroke="#fff" stroke-width="1" stroke-linejoin="bevel"/></svg>
<div class="a" style="left:75px;top:521px;width:59px;height:15px;background:#000;"></div>
<div class="t" style="left:76.80px;top:522px;font-size:11.5px;color:#fff;transform:scaleX(1.1239);">7/23/2020</div>
<svg class="a" style="left:138px;top:521px" width="16" height="16"><rect x="0" y="2" width="16" height="13" fill="#4d6fae"/><rect x="1" y="3" width="14" height="2" fill="#7da2e0"/><rect x="2" y="3" width="5" height="1" fill="#dfe8f8"/><rect x="1" y="0" width="1" height="2" fill="#333"/><rect x="0" y="0" width="1" height="2" fill="#fff"/><rect x="3" y="0" width="1" height="2" fill="#333"/><rect x="2" y="0" width="1" height="2" fill="#fff"/><rect x="5" y="0" width="1" height="2" fill="#333"/><rect x="4" y="0" width="1" height="2" fill="#fff"/><rect x="7" y="0" width="1" height="2" fill="#333"/><rect x="6" y="0" width="1" height="2" fill="#fff"/><rect x="9" y="0" width="1" height="2" fill="#333"/><rect x="8" y="0" width="1" height="2" fill="#fff"/><rect x="11" y="0" width="1" height="2" fill="#333"/><rect x="10" y="0" width="1" height="2" fill="#fff"/><rect x="13" y="0" width="1" height="2" fill="#333"/><rect x="12" y="0" width="1" height="2" fill="#fff"/><rect x="15" y="0" width="1" height="2" fill="#333"/><rect x="14" y="0" width="1" height="2" fill="#fff"/><rect x="1" y="5" width="2" height="2" fill="#fff"/><rect x="4" y="5" width="2" height="2" fill="#fff"/><rect x="7" y="5" width="2" height="2" fill="#fff"/><rect x="10" y="5" width="2" height="2" fill="#fff"/><rect x="13" y="5" width="2" height="2" fill="#fff"/><rect x="1" y="8" width="2" height="2" fill="#fff"/><rect x="4" y="8" width="2" height="2" fill="#fff"/><rect x="7" y="8" width="2" height="2" fill="#fff"/><rect x="10" y="8" width="2" height="2" fill="#fff"/><rect x="13" y="8" width="2" height="2" fill="#fff"/><rect x="1" y="11" width="2" height="2" fill="#fff"/><rect x="4" y="11" width="2" height="2" fill="#fff"/><rect x="7" y="11" width="2" height="2" fill="#fff"/><rect x="10" y="11" width="2" height="2" fill="#fff"/><rect x="13" y="11" width="2" height="2" fill="#fff"/><rect x="9.5" y="7.5" width="4" height="4" fill="none" stroke="#e03a10" stroke-width="1.2"/></svg>
<div class="t" style="left:232.53px;top:522px;font-size:11.5px;transform:scaleX(1.0435);">5</div>
<div class="t" style="left:82.90px;top:542px;font-size:11.5px;transform:scaleX(1.1482);">8/6/2020</div>
<div class="t" style="left:225.80px;top:542px;font-size:11.5px;transform:scaleX(1.0475);">10</div>
<div class="t" style="left:76.80px;top:562px;font-size:11.5px;transform:scaleX(1.1239);">8/13/2020</div>
<div class="t" style="left:225.80px;top:562px;font-size:11.5px;transform:scaleX(1.0475);">10</div>
<svg class="a" style="left:12.5px;top:583.5px" width="12" height="12"><path d="M6 1.5 V10.5 M2.1 3.75 L9.9 8.25 M2.1 8.25 L9.9 3.75" stroke="#000" stroke-width="1.05"/></svg>
<div class="t" style="left:356.90px;top:487px;font-size:11.3px;font-weight:bold;transform:scaleX(0.9047);">Files:</div>
<div class="t" style="left:552.30px;top:487px;font-size:11.3px;font-weight:bold;color:#0000ff;transform:scaleX(1.0153);">Add</div>
<div class="t" style="left:708.40px;top:487px;font-size:11.3px;font-weight:bold;color:#7030a0;transform:scaleX(1.0960);">View</div>
<div class="t" style="left:875.60px;top:487px;font-size:11.3px;font-weight:bold;color:#ff0000;transform:scaleX(1.1145);">Delete</div>
<div class="a" style="left:356px;top:502px;width:1326px;height:109px;background:#fff;"></div>
<div class="a" style="left:356px;top:502px;width:1326px;height:1px;background:#000;"></div>
<div class="a" style="left:356px;top:610px;width:1326px;height:1px;background:#000;"></div>
<div class="a" style="left:356px;top:502px;width:1px;height:109px;background:#000;"></div>
<div class="a" style="left:357px;top:518px;width:1325px;height:1px;background:#a0a0a0;"></div>
<div class="a" style="left:428px;top:503px;width:1px;height:15px;background:#1e1e1e;"></div>
<div class="a" style="left:428px;top:519px;width:1px;height:90px;background:#b4b4b4;"></div>
<div class="a" style="left:464px;top:503px;width:1px;height:15px;background:#1e1e1e;"></div>
<div class="a" style="left:464px;top:519px;width:1px;height:90px;background:#b4b4b4;"></div>
<div class="a" style="left:656px;top:503px;width:1px;height:15px;background:#1e1e1e;"></div>
<div class="a" style="left:656px;top:519px;width:1px;height:90px;background:#b4b4b4;"></div>
<div class="a" style="left:848px;top:503px;width:1px;height:15px;background:#1e1e1e;"></div>
<div class="a" style="left:848px;top:519px;width:1px;height:90px;background:#b4b4b4;"></div>
<div class="t" style="left:359.90px;top:504px;font-size:11.5px;">Added</div>
<div class="t" style="left:431.80px;top:504px;font-size:11.5px;transform:scaleX(1.0435);">LI</div>
<div class="t" style="left:468.10px;top:504px;font-size:11.5px;transform:scaleX(1.0122);">Desc</div>
<div class="t" style="left:659.50px;top:504px;font-size:11.5px;transform:scaleX(1.0133);">File Name</div>
<div class="t" style="left:851.50px;top:504px;font-size:11.5px;transform:scaleX(0.9933);">Path</div>
<div class="t" style="left:359.90px;top:520px;font-size:11.5px;transform:scaleX(1.1362);">07/29/2020</div>
<div class="t" style="left:431.80px;top:520px;font-size:11.5px;transform:scaleX(1.0435);">1</div>
<div class="t" style="left:468.10px;top:520px;font-size:11.5px;transform:scaleX(1.0971);">Fabrication Drawing</div>
<div class="t" style="left:659.50px;top:520px;font-size:11.5px;transform:scaleX(1.0213);">311-INN10869-03_R1.PDF</div>
<div class="t" style="left:851.50px;top:520px;font-size:11.5px;transform:scaleX(1.0393);">C:\DemoFiles\311-INN10869-03_R1.PDF</div>
<div class="t" style="left:359.90px;top:536px;font-size:11.5px;transform:scaleX(1.1362);">07/30/2020</div>
<div class="t" style="left:431.80px;top:536px;font-size:11.5px;transform:scaleX(1.0435);">2</div>
<div class="t" style="left:468.10px;top:536px;font-size:11.5px;transform:scaleX(1.0748);">Assembly Drawing</div>
<div class="t" style="left:659.50px;top:536px;font-size:11.5px;transform:scaleX(1.0771);">147917.pdf</div>
<div class="t" style="left:851.50px;top:536px;font-size:11.5px;transform:scaleX(1.0435);">C:\DemoFiles\147917.pdf</div>
<div class="t" style="left:359.90px;top:552px;font-size:11.5px;transform:scaleX(1.1362);">07/30/2020</div>
<div class="t" style="left:431.80px;top:552px;font-size:11.5px;transform:scaleX(0.8112);">ALL</div>
<div class="t" style="left:468.10px;top:552px;font-size:11.5px;transform:scaleX(1.0344);">Packaging Requirments</div>
<div class="t" style="left:659.50px;top:552px;font-size:11.5px;transform:scaleX(0.9634);">1478_1.JPG</div>
<div class="t" style="left:851.50px;top:552px;font-size:11.5px;">C:\DemoFiles\1478_1.JPG</div>
<div class="t" style="left:356.90px;top:615px;font-size:11.3px;font-weight:bold;transform:scaleX(0.9566);">Quality Clauses</div>
<div class="t" style="left:488.90px;top:615px;font-size:11.3px;font-weight:bold;color:#0000ff;transform:scaleX(0.9743);">Add</div>
<div class="t" style="left:988.50px;top:615px;font-size:11.3px;font-weight:bold;color:#ff0000;transform:scaleX(1.0909);">Delete</div>
<div class="a" style="left:356px;top:630px;width:1326px;height:117px;background:#fff;"></div>
<div class="a" style="left:356px;top:630px;width:1326px;height:1px;background:#000;"></div>
<div class="a" style="left:356px;top:746px;width:1326px;height:1px;background:#000;"></div>
<div class="a" style="left:356px;top:630px;width:1px;height:117px;background:#000;"></div>
<div class="a" style="left:357px;top:646px;width:1325px;height:1px;background:#a0a0a0;"></div>
<div class="a" style="left:404px;top:631px;width:1px;height:15px;background:#1e1e1e;"></div>
<div class="a" style="left:404px;top:647px;width:1px;height:99px;background:#b4b4b4;"></div>
<div class="a" style="left:572px;top:631px;width:1px;height:15px;background:#1e1e1e;"></div>
<div class="a" style="left:572px;top:647px;width:1px;height:99px;background:#b4b4b4;"></div>
<div class="a" style="left:620px;top:631px;width:1px;height:15px;background:#1e1e1e;"></div>
<div class="a" style="left:620px;top:647px;width:1px;height:99px;background:#b4b4b4;"></div>
<div class="t" style="left:360.10px;top:632px;font-size:11.5px;transform:scaleX(0.7819);">LI</div>
<div class="t" style="left:407.70px;top:632px;font-size:11.5px;">No</div>
<div class="t" style="left:575.40px;top:632px;font-size:11.5px;transform:scaleX(0.9578);">Sub</div>
<div class="t" style="left:623.40px;top:632px;font-size:11.5px;transform:scaleX(1.0392);">Clause</div>
<div class="t" style="left:360.10px;top:648px;font-size:11.5px;transform:scaleX(0.9151);white-space:pre;">ALL</div>
<div class="t" style="left:407.70px;top:648px;font-size:11.5px;transform:scaleX(0.9152);white-space:pre;">CofC &amp; CERT&#x27;s REQUIRED</div>
<div class="t" style="left:623.40px;top:648px;font-size:11.5px;transform:scaleX(0.9152);white-space:pre;">CERTIFICATE OF CONFORMANCE, RAW MATERIAL AND SPECIAL PROCESS  CERTIFICATIONS ARE REQUIRED WITH EACH SHIPMENT.</div>
<div class="t" style="left:360.10px;top:664px;font-size:11.5px;transform:scaleX(0.9151);white-space:pre;">ALL</div>
<div class="t" style="left:407.70px;top:664px;font-size:11.5px;transform:scaleX(0.9152);white-space:pre;">CONFIRM PO</div>
<div class="t" style="left:623.40px;top:664px;font-size:11.5px;transform:scaleX(0.9152);white-space:pre;">PLEASE CONFIRM THIS PURCHASE ORDER.</div>
<div class="t" style="left:360.10px;top:680px;font-size:11.5px;transform:scaleX(0.9151);white-space:pre;">1</div>
<div class="t" style="left:407.70px;top:680px;font-size:11.5px;transform:scaleX(0.9152);white-space:pre;">MILL TR&#x27;s REQUIRED</div>
<div class="t" style="left:623.40px;top:680px;font-size:11.5px;transform:scaleX(0.9152);white-space:pre;">MILL TEST REPORTS ARE REQUIRED WITH EACH SHIPMENT.</div>
</body></html>
